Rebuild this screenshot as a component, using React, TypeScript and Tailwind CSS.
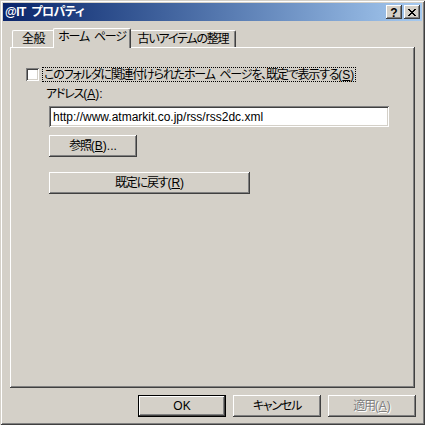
import React from 'react';

const raised =
  'shadow-[inset_-1px_-1px_#404040,inset_1px_1px_#ffffff,inset_-2px_-2px_#808080,inset_2px_2px_#d4d0c8]';
const sunken =
  'shadow-[inset_1px_1px_#808080,inset_-1px_-1px_#ffffff,inset_2px_2px_#404040,inset_-2px_-2px_#d4d0c8]';

// access key like (S) with underline, normal spacing
const Key: React.FC<{ k: string }> = ({ k }) => (
  <span className="tracking-normal">
    (<u>{k}</u>)
  </span>
);

const Btn: React.FC<{ w: string; children: React.ReactNode; def?: boolean; disabled?: boolean }> = ({
  w,
  children,
  def,
  disabled,
}) => (
  <div className={`${w} h-[22px] ${def ? 'border border-black' : ''} bg-[#d4d0c8]`}>
    <div
      className={`w-full h-full flex items-center justify-center ${raised} ${
        disabled ? 'text-[#808080] [text-shadow:1px_1px_0_#ffffff]' : 'text-black'
      }`}
    >
      {children}
    </div>
  </div>
);

const CloseGlyph = () => (
  <svg width="8" height="7" viewBox="0 0 8 7" shapeRendering="crispEdges">
    <rect x="0" y="0" width="2" height="1" />
    <rect x="6" y="0" width="2" height="1" />
    <rect x="1" y="1" width="2" height="1" />
    <rect x="5" y="1" width="2" height="1" />
    <rect x="2" y="2" width="4" height="1" />
    <rect x="3" y="3" width="2" height="1" />
    <rect x="2" y="4" width="4" height="1" />
    <rect x="1" y="5" width="2" height="1" />
    <rect x="5" y="5" width="2" height="1" />
    <rect x="0" y="6" width="2" height="1" />
    <rect x="6" y="6" width="2" height="1" />
  </svg>
);

export default function App() {
  return (
    <div
      className={`w-[425px] h-[425px] bg-[#d4d0c8] p-[3px] flex flex-col text-[12px] leading-[14px] tracking-[-1.2px] text-black font-['Liberation_Sans','Noto_Sans_CJK_JP',sans-serif] [font-feature-settings:'palt'] shadow-[inset_1px_1px_#d4d0c8,inset_-1px_-1px_#404040,inset_2px_2px_#ffffff,inset_-2px_-2px_#808080]`}
    >
      {/* title bar */}
      <div className="h-[18px] flex items-center bg-linear-to-r from-[#0a246a] to-[#a6caf0] pl-[2px] pr-[2px]">
        <span className="text-white font-bold text-[12px] tracking-[-0.5px]">@IT&#x2002;プロパティ</span>
        <div className="ml-auto flex gap-[2px]">
          <div className={`w-[16px] h-[14px] bg-[#d4d0c8] flex items-center justify-center ${raised}`}>
            <span className="font-bold text-[12px] leading-[12px] mt-[1px] tracking-normal">?</span>
          </div>
          <div className={`w-[16px] h-[14px] bg-[#d4d0c8] flex items-center justify-center ${raised}`}>
            <CloseGlyph />
          </div>
        </div>
      </div>

      <div className="flex flex-col px-[7px] pt-[7px]">
        {/* tabs */}
        <div className="flex items-end h-[19px] relative z-10">
          <div className="ml-[2px] w-[41px] h-[17px] border-l border-t border-white rounded-tl-[2px] flex items-center justify-center pl-[1px] tracking-[-0.5px]">
            全般
          </div>
          <div className="w-[78px] h-[20px] -mb-px bg-[#d4d0c8] border-l border-t border-white rounded-t-[2px] border-r border-r-[#404040] shadow-[inset_-1px_0_#808080] flex items-center justify-center pb-[3px]">
            ホーム&#x2002;ページ
          </div>
          <div className="w-[105px] h-[17px] border-t border-white border-r border-r-[#404040] rounded-tr-[2px] shadow-[inset_-1px_0_#808080] flex items-center justify-center">
            古いアイテムの整理
          </div>
        </div>

        {/* panel */}
        <div className="h-[341px] flex flex-col items-start pt-[20px] pl-[16px] shadow-[inset_-1px_-1px_#404040,inset_1px_1px_#ffffff,inset_-2px_-2px_#808080]">
          <div className="h-[15px] flex items-center">
            <div className={`w-[13px] h-[13px] bg-white ${sunken}`} />
            <div className="ml-[3px] h-[15px] flex items-center px-[1px] border border-dotted border-black">
              このフォルダに関連付けられたホーム&#x2002;ページを、既定で表示する<Key k="S" />
            </div>
          </div>
          <div className="mt-[5px] ml-[20px] h-[14px]">
            アドレス<Key k="A" />:
          </div>
          <div className={`mt-[5px] ml-[23px] w-[340px] h-[21px] bg-white flex items-center pl-[4px] tracking-normal ${sunken}`}>
            http://www.atmarkit.co.jp/rss/rss2dc.xml
          </div>
          <div className="mt-[8px] ml-[23px]">
            <Btn w="w-[88px]">
              参照<Key k="B" />
              <span className="tracking-normal">...</span>
            </Btn>
          </div>
          <div className="mt-[15px] ml-[23px]">
            <Btn w="w-[201px]">
              既定に戻す<Key k="R" />
            </Btn>
          </div>
        </div>
      </div>

      {/* bottom buttons */}
      <div className="mt-[7px] flex justify-end gap-[7px] pr-[6px]">
        <Btn w="w-[88px]" def>
          <span className="tracking-normal">OK</span>
        </Btn>
        <Btn w="w-[88px]">キャンセル</Btn>
        <Btn w="w-[88px]" disabled>
          適用<Key k="A" />
        </Btn>
      </div>
    </div>
  );
}
